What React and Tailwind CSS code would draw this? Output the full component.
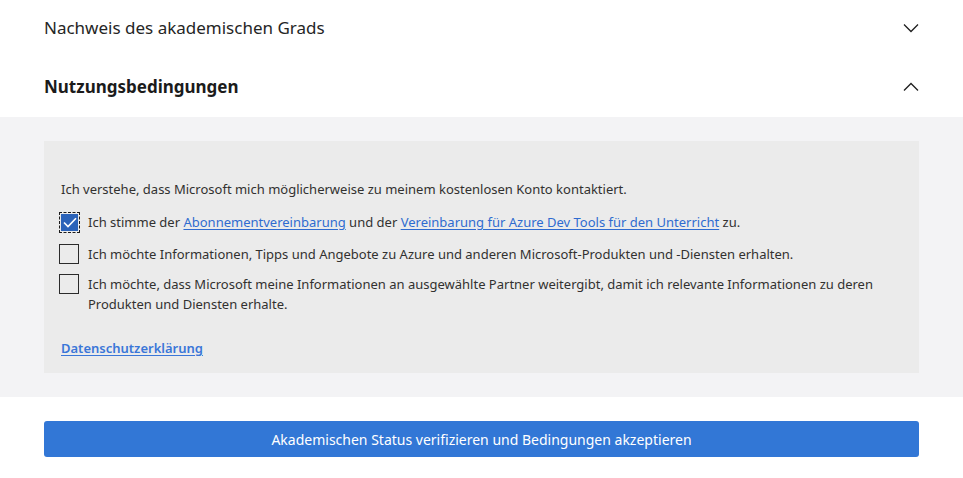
import React from "react";

function Chevron({ up }) {
  return (
    <svg width="16" height="9" viewBox="0 0 16 9" fill="none" className="block">
      {up ? (
        <path d="M1 8.5 L8 1.5 L15 8.5" stroke="#1f1f1f" strokeWidth="1.3" />
      ) : (
        <path d="M1 0.5 L8 7.5 L15 0.5" stroke="#1f1f1f" strokeWidth="1.3" />
      )}
    </svg>
  );
}

function Box({ checked }) {
  if (checked) {
    return (
      <div className="w-[21px] h-[21px] shrink-0 border border-dashed border-[#1a1a1a] p-px">
        <div className="w-full h-full bg-[#2b63b9] flex items-center justify-center">
          <svg width="14" height="11" viewBox="0 0 14 11" fill="none">
            <path d="M1 5.5 L5 9.5 L13 1.2" stroke="white" strokeWidth="1.6" />
          </svg>
        </div>
      </div>
    );
  }
  return <div className="w-[20px] h-[20px] shrink-0 border border-[#2b2b2b] bg-transparent" />;
}

export default function App() {
  return (
    <div className="w-[963px] h-[478px] bg-white text-[#323130] font-['Noto_Sans','Open_Sans',sans-serif]">
      <div className="h-[56px] px-[44px] flex items-center justify-between">
        <span className="text-[17px] text-[#252525]">Nachweis des akademischen Grads</span>
        <Chevron />
      </div>
      <div className="h-[61px] px-[44px] flex items-center justify-between">
        <span className="text-[17px] font-bold text-[#1b1b1b]">Nutzungsbedingungen</span>
        <Chevron up />
      </div>
      <div className="bg-[#f3f3f5] px-[44px] py-[24px]">
        <div className="bg-[#ebebeb] px-[17px] pt-[38px] pb-[15px] text-[13px] leading-[20px]">
          <p>Ich verstehe, dass Microsoft mich möglicherweise zu meinem kostenlosen Konto kontaktiert.</p>
          <div className="mt-[13px] flex items-start gap-[8px] -ml-[2px]">
            <Box checked />
            <p>
              Ich stimme der{" "}
              <a className="text-[#2f6bd0] underline underline-offset-2">Abonnementvereinbarung</a> und der{" "}
              <a className="text-[#2f6bd0] underline underline-offset-2">Vereinbarung für Azure Dev Tools für den Unterricht</a> zu.
            </p>
          </div>
          <div className="mt-[11px] flex items-start gap-[9px] -ml-[2px]">
            <Box />
            <p>Ich möchte Informationen, Tipps und Angebote zu Azure und anderen Microsoft-Produkten und -Diensten erhalten.</p>
          </div>
          <div className="mt-[10px] flex items-start gap-[9px] -ml-[2px]">
            <Box />
            <p>
              Ich möchte, dass Microsoft meine Informationen an ausgewählte Partner weitergibt, damit ich relevante Informationen zu deren Produkten und Diensten erhalte.
            </p>
          </div>
          <div className="mt-[24px]">
            <a className="text-[#3a76d8] font-semibold underline underline-offset-2">Datenschutzerklärung</a>
          </div>
        </div>
      </div>
      <div className="px-[44px] pt-[24px]">
        <button className="w-full h-[36px] rounded-[3px] bg-[#3277d6] text-white text-[14px] flex items-center justify-center">
          Akademischen Status verifizieren und Bedingungen akzeptieren
        </button>
      </div>
    </div>
  );
}
